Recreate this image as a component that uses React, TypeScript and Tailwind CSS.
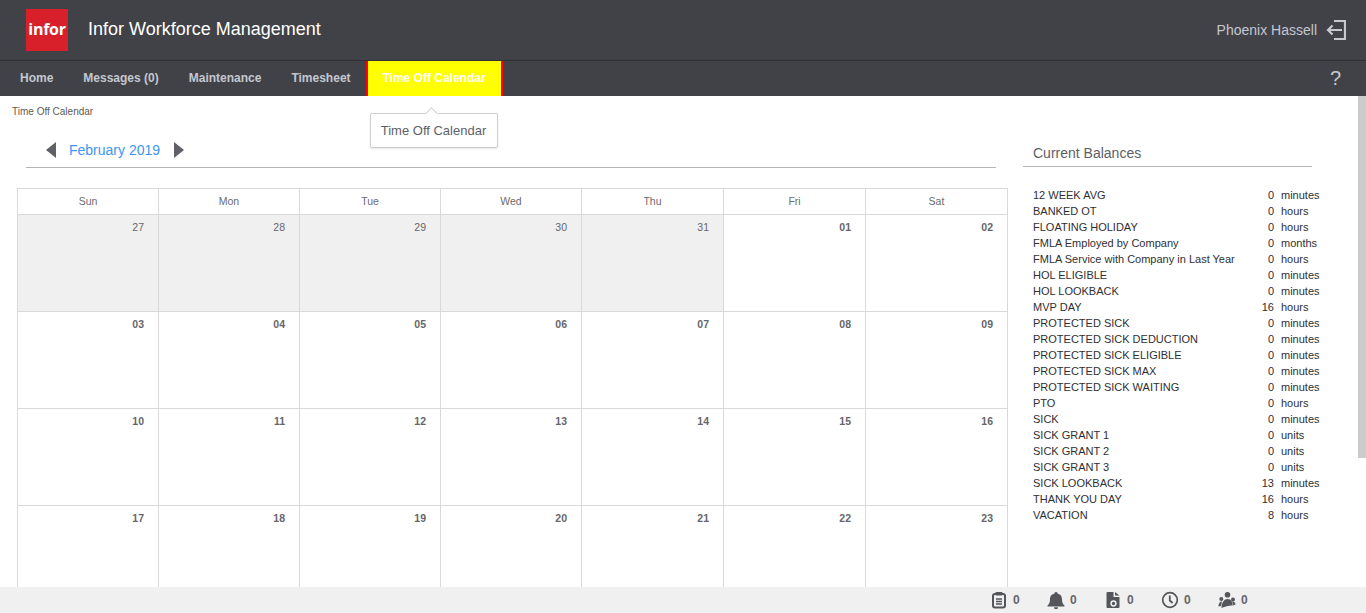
import React from "react";

const navItems = ["Home", "Messages (0)", "Maintenance", "Timesheet"];
const days = ["Sun", "Mon", "Tue", "Wed", "Thu", "Fri", "Sat"];
const weeks = [
  ["27", "28", "29", "30", "31", "01", "02"],
  ["03", "04", "05", "06", "07", "08", "09"],
  ["10", "11", "12", "13", "14", "15", "16"],
  ["17", "18", "19", "20", "21", "22", "23"],
];
const balances: [string, string, string][] = [
  ["12 WEEK AVG", "0", "minutes"],
  ["BANKED OT", "0", "hours"],
  ["FLOATING HOLIDAY", "0", "hours"],
  ["FMLA Employed by Company", "0", "months"],
  ["FMLA Service with Company in Last Year", "0", "hours"],
  ["HOL ELIGIBLE", "0", "minutes"],
  ["HOL LOOKBACK", "0", "minutes"],
  ["MVP DAY", "16", "hours"],
  ["PROTECTED SICK", "0", "minutes"],
  ["PROTECTED SICK DEDUCTION", "0", "minutes"],
  ["PROTECTED SICK ELIGIBLE", "0", "minutes"],
  ["PROTECTED SICK MAX", "0", "minutes"],
  ["PROTECTED SICK WAITING", "0", "minutes"],
  ["PTO", "0", "hours"],
  ["SICK", "0", "minutes"],
  ["SICK GRANT 1", "0", "units"],
  ["SICK GRANT 2", "0", "units"],
  ["SICK GRANT 3", "0", "units"],
  ["SICK LOOKBACK", "13", "minutes"],
  ["THANK YOU DAY", "16", "hours"],
  ["VACATION", "8", "hours"],
];

function FooterIcon({ kind }: { kind: string }) {
  const c = "#55565b";
  if (kind === "clip")
    return (
      <svg width="18" height="18" viewBox="0 0 18 18" fill="none">
        <rect x="3" y="3" width="12" height="13.500" rx="2" stroke={c} strokeWidth="2" />
        <rect x="5.500" y="1" width="7" height="3.500" rx="0.800" fill={c} />
        <path d="M6 8h6M6 10.500h6M6 13h6" stroke={c} strokeWidth="1.400" />
      </svg>
    );
  if (kind === "bell")
    return (
      <svg width="18" height="18" viewBox="0 0 18 18" fill={c}>
        <path d="M9 1a1.500 1.500 0 0 1 1.500 1.600C14 3.400 15 6 15 8.500c0 3 1 4.800 2.500 6V15.500H.5v-1C2 13.300 3 11.500 3 8.500 3 6 4 3.400 7.500 2.600A1.500 1.500 0 0 1 9 1zM7 16.200h4a2 2 0 0 1-4 0z" />
      </svg>
    );
  if (kind === "disc")
    return (
      <svg width="18" height="18" viewBox="0 0 18 18">
        <path d="M3.500 1H9.500V6H15.500V16a1 1 0 0 1-1 1H3.500a1 1 0 0 1-1-1V2a1 1 0 0 1 1-1z" fill={c} />
        <path d="M11 1l4.500 3.500H11z" fill={c} />
        <circle cx="9.500" cy="12.500" r="2.400" fill="none" stroke="#f0f0f0" strokeWidth="1.500" />
      </svg>
    );
  if (kind === "clock")
    return (
      <svg width="18" height="18" viewBox="0 0 18 18" fill="none" stroke={c}>
        <circle cx="9" cy="9" r="7.300" strokeWidth="1.700" />
        <path d="M8.800 4.500V9.500l2.800 2.500" strokeWidth="1.800" />
      </svg>
    );
  return (
    <svg width="18" height="18" viewBox="0 0 18 18" fill={c}>
      <circle cx="9.500" cy="3.800" r="2.800" />
      <circle cx="3.300" cy="8" r="2" />
      <circle cx="15" cy="8.500" r="2" />
      <path d="M3.500 17C3.500 12.500 5.500 8 9.500 8S15 11.500 14.500 14.500C12 14.500 9 15 3.500 17z" />
      <path d="M0.500 15.500C0.500 12.500 1.500 10.500 4 10.500L3 15z" />
      <path d="M15 14.500C15 12.500 14.500 11.500 14 10.500 16 10 17.500 11.500 17.500 13.500z" />
    </svg>
  );
}

export default function App() {
  return (
    <div className="h-[613px] w-[1366px] overflow-hidden flex flex-col bg-white font-['Liberation_Sans',Arial,sans-serif]">
      <header className="h-[61px] shrink-0 bg-[#414247] border-b border-[#2f3034] flex items-center pl-[26px] pr-[20px]">
        <div className="w-[42px] h-[42px] bg-[#d8202a] flex items-center justify-center pb-[2px] text-white font-bold text-[16px] tracking-[-0.3px] font-['Open_Sans',sans-serif]">
          infor
        </div>
        <div className="ml-[20px] pb-[2px] text-white text-[18px]">Infor Workforce Management</div>
        <div className="ml-auto flex items-center gap-[9px] text-[#c4c7d0] text-[14px]">
          <span>Phoenix Hassell</span>
          <svg width="20" height="20" viewBox="0 0 20 20" fill="none" stroke="#c8c9ce" strokeWidth="2.200">
            <path d="M8 1H19V19H8" />
            <path d="M16 10H2M6.500 5.500 2 10l4.500 4.500" />
          </svg>
        </div>
      </header>

      <nav className="h-[35px] shrink-0 bg-[#414247] flex items-stretch pl-[5px] pr-[25px] text-[12px] font-bold text-[#c4c7d0]">
        {navItems.map((n) => (
          <div key={n} className="px-[15px] pb-[2px] flex items-center">{n}</div>
        ))}
        <div className="w-[137px] pb-[2px] bg-[#ffff00] border-x-[2px] border-[#ff0000] text-white flex items-center justify-center">
          Time Off Calendar
        </div>
        <div className="ml-auto pb-[2px] flex items-center text-[#c8c9ce] text-[20px] font-normal">?</div>
      </nav>

      <div className="relative flex-1 min-h-0 overflow-hidden">
        <div className="absolute right-0 top-0 w-[8px] h-[362px] bg-[#cccccc]" />

        <div className="absolute z-10 left-[370px] top-[17px] w-[128px] h-[35px] pr-[1px] bg-white border border-[#cfcfcf] rounded-[2px] shadow-[0_1px_2px_rgba(0,0,0,0.1)] flex items-center justify-center text-[13px] text-[#5e6066]">
          Time Off Calendar
          <div className="absolute left-[56px] -top-[5px] w-[9px] h-[9px] rotate-45 bg-white border-l border-t border-[#cfcfcf]" />
        </div>

        <div className="pl-[12px] pt-[10px] text-[10px] leading-[12px] text-[#5f5a54]">Time Off Calendar</div>

        <div className="flex items-start">
          <div className="w-[1008px] shrink-0">
            <div className="ml-[26px] w-[970px] h-[40px] mt-[10px] border-b border-[#b5b5b5] flex items-center pl-[20px] pt-[5px]">
              <svg width="10" height="16" viewBox="0 0 10 16" fill="#5f6068"><path d="M10 0v16L0 8z" /></svg>
              <span className="ml-[13px] text-[14px] text-[#3b97f0]">February 2019</span>
              <svg className="ml-[14px]" width="10" height="16" viewBox="0 0 10 16" fill="#5f6068"><path d="M0 0v16l10-8z" /></svg>
            </div>

            <div className="ml-[17px] mt-[20px] w-[991px] border-l border-t border-[#d9d9d9] grid grid-cols-[141px_141px_141px_141px_142px_142px_142px]">
              {days.map((d) => (
                <div key={d} className="h-[26px] border-r border-b border-[#d9d9d9] flex items-center justify-center text-[10.500px] text-[#6b6b70]">
                  {d}
                </div>
              ))}
              {weeks.flat().map((d, i) => {
                const prev = i < 5;
                return (
                  <div
                    key={i}
                    className={`h-[97px] border-r border-b border-[#d9d9d9] pt-[6px] pr-[14px] text-right text-[10.500px] leading-[12px] text-[#66666a] ${
                      prev ? "bg-[#f0f0f0]" : "font-bold"
                    }`}
                  >
                    {d}
                  </div>
                );
              })}
            </div>
          </div>

          <aside className="ml-[15px] w-[289px] shrink-0 pt-[8px]">
            <h2 className="h-[41px] border-b border-[#b5b5b5] pl-[10px] pt-[19px] text-[14px] leading-[16px] font-normal text-[#5e6066]">
              Current Balances
            </h2>
            <div className="mt-[20px] pl-[10px] text-[11px] leading-[16px] text-[#2f2f33]">
              {balances.map(([name, val, unit]) => (
                <div key={name} className="flex w-[300px]">
                  <span className="w-[215px] whitespace-nowrap">{name}</span>
                  <span className="w-[26px] text-right">{val}</span>
                  <span className="ml-[7px]">{unit}</span>
                </div>
              ))}
            </div>
          </aside>
        </div>
      </div>

      <footer className="h-[26px] shrink-0 bg-[#f0f0f0] flex items-center justify-end pr-[91px] text-[12px] font-bold text-[#66666a]">
        {["clip", "bell", "disc", "clock", "people"].map((k) => (
          <div key={k} className="w-[57px] flex items-center gap-[5px]">
            <FooterIcon kind={k} />
            <span>0</span>
          </div>
        ))}
      </footer>
    </div>
  );
}
